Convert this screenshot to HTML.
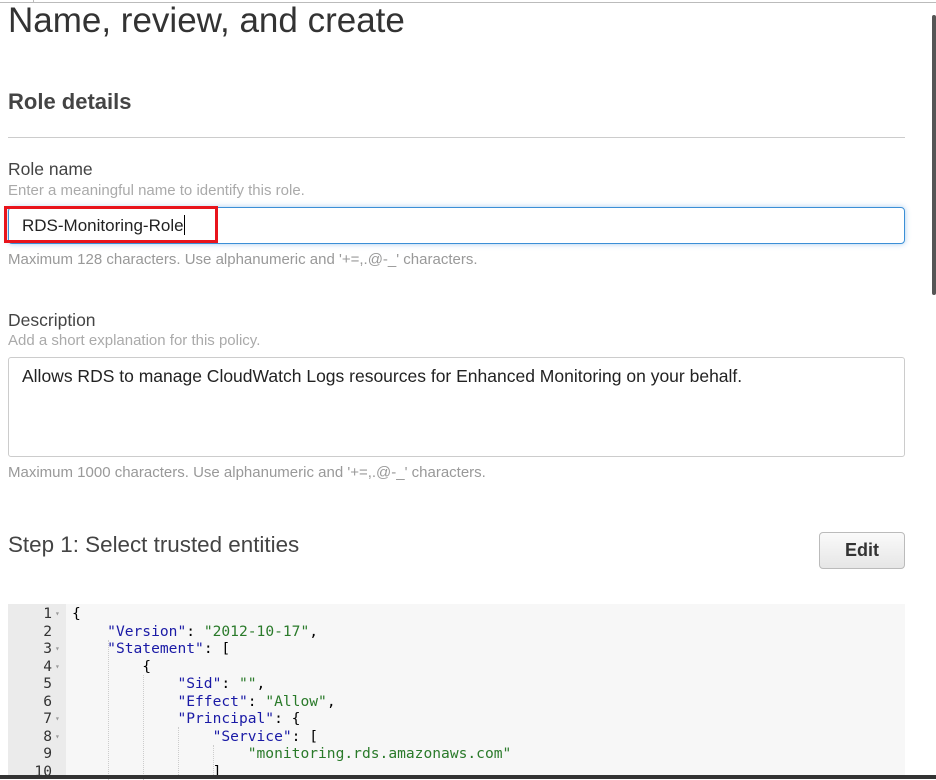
<!DOCTYPE html>
<html><head><meta charset="utf-8"><style>
*{box-sizing:border-box;margin:0;padding:0}
body{width:936px;height:779px;overflow:hidden;background:#fff;font-family:"Liberation Sans",Arial,sans-serif;position:relative;color:#444}
.a{position:absolute;white-space:nowrap}
.code{font-family:"DejaVu Sans Mono","Liberation Mono",monospace;font-size:14.6px;line-height:17.5px}
.s{color:#1a1aa6}.v{color:#2a7a2a}
</style></head><body>
<div class="a" style="left:0;top:2px;width:936px;height:1px;background:#bbb"></div>
<div class="a" style="left:33px;top:0;width:1px;height:3px;background:#bbb"></div>
<div class="a" style="left:8px;top:0px;font-size:35px;color:#333;line-height:42px">Name, review, and create</div>
<div class="a" style="left:8px;top:89px;font-size:22px;font-weight:bold;color:#444">Role details</div>
<div class="a" style="left:8px;top:137px;width:897px;height:1px;background:#ccc"></div>
<div class="a" style="left:8px;top:159px;font-size:17.5px;color:#444">Role name</div>
<div class="a" style="left:8px;top:182px;font-size:15px;color:#aaa">Enter a meaningful name to identify this role.</div>
<div class="a" style="left:8px;top:207px;width:897px;height:37px;border:1px solid #3b8fd6;border-radius:4px;box-shadow:0 0 6px rgba(60,140,220,.45)"></div>
<div class="a" style="left:4px;top:206px;width:214px;height:37px;border:3px solid #e8141c"></div>
<div class="a" style="left:22px;top:215px;font-size:17px;color:#222">RDS-Monitoring-Role<span style="display:inline-block;width:1px;height:20px;background:#000;vertical-align:-4px"></span></div>
<div class="a" style="left:8px;top:251px;font-size:15px;color:#999">Maximum 128 characters. Use alphanumeric and '+=,.@-_' characters.</div>
<div class="a" style="left:8px;top:310px;font-size:17.5px;color:#444">Description</div>
<div class="a" style="left:8px;top:332px;font-size:15px;color:#aaa">Add a short explanation for this policy.</div>
<div class="a" style="left:8px;top:357px;width:897px;height:100px;border:1px solid #ccc;border-radius:3px"></div>
<div class="a" style="left:22px;top:366px;font-size:17.5px;color:#222">Allows RDS to manage CloudWatch Logs resources for Enhanced Monitoring on your behalf.</div>
<div class="a" style="left:8px;top:464px;font-size:15px;color:#999">Maximum 1000 characters. Use alphanumeric and '+=,.@-_' characters.</div>
<div class="a" style="left:8px;top:532px;font-size:22.4px;color:#444">Step 1: Select trusted entities</div>
<div class="a" style="left:819px;top:532px;width:86px;height:37px;border:1px solid #bbb;border-radius:4px;background:linear-gradient(#fafafa,#e6e6e6);font-size:18px;font-weight:bold;color:#333;text-align:center;line-height:35px">Edit</div>
<div class="a" style="left:8px;top:604px;width:58px;height:175px;background:#ebebeb"></div>
<div class="a" style="left:66px;top:604px;width:839px;height:175px;background:#f7f7f7"></div>
<div class="a code" style="left:8px;top:605px;width:44px;text-align:right;color:#333">1<br>2<br>3<br>4<br>5<br>6<br>7<br>8<br>9<br>10</div>
<div class="a code" style="left:55px;top:605px;font-size:8px;color:#999;line-height:17.5px">▾<br><br>▾<br>▾<br><br><br>▾<br>▾</div>
<div class="a" style="left:108px;top:640px;width:0;height:140px;border-left:1px dotted #ccc"></div>
<div class="a" style="left:143px;top:675px;width:0;height:105px;border-left:1px dotted #ccc"></div>
<div class="a" style="left:178px;top:727px;width:0;height:52px;border-left:1px dotted #ccc"></div>
<div class="a" style="left:213px;top:745px;width:0;height:34px;border-left:1px dotted #ccc"></div>
<pre class="a code" style="left:72px;top:605px;color:#000;white-space:pre">{
    <span class="s">"Version"</span>: <span class="v">"2012-10-17"</span>,
    <span class="s">"Statement"</span>: [
        {
            <span class="s">"Sid"</span>: <span class="v">""</span>,
            <span class="s">"Effect"</span>: <span class="v">"Allow"</span>,
            <span class="s">"Principal"</span>: {
                <span class="s">"Service"</span>: [
                    <span class="v">"monitoring.rds.amazonaws.com"</span>
                ]</pre>
<div class="a" style="left:932px;top:15px;width:4px;height:280px;background:#555;border-radius:2px"></div>
<div class="a" style="left:0;top:775px;width:936px;height:4px;background:#333"></div>
</body></html>
